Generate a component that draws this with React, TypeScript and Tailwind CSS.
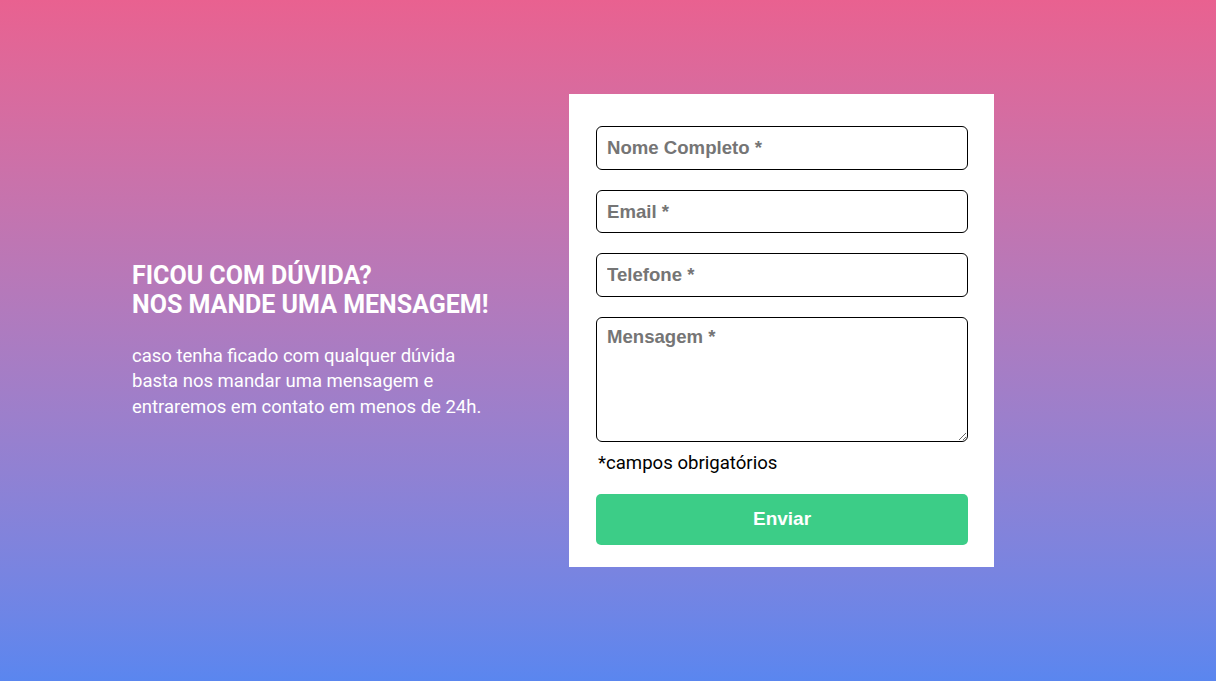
export default function App() {
  return (
    <div className="min-h-[681px] w-full bg-gradient-to-b from-[#e96190] to-[#5a86ef] flex items-center font-['Roboto',sans-serif]">
      <div className="flex items-center w-full pl-[132px] pb-5">
        <div className="w-[390px] pt-5 text-white">
          <h1 className="text-[25px] font-bold leading-[29px] uppercase">
            Ficou com dúvida?
            <br />
            Nos mande uma mensagem!
          </h1>
          <p className="mt-[25px] text-[18.5px] leading-[25.5px] w-[362px]">
            caso tenha ficado com qualquer dúvida basta nos mandar uma mensagem e entraremos em contato em menos de 24h.
          </p>
        </div>
        <form
          onSubmit={(e) => e.preventDefault()}
          className="ml-[47px] w-[425px] bg-white pt-8 pl-[27px] pr-[26px] pb-[22px] flex flex-col"
        >
          <input
            type="text"
            placeholder="Nome Completo *"
            className="h-[44px] w-full rounded-[6px] border border-black px-[10px] text-[18.6px] font-bold font-['Liberation_Sans',Arial,sans-serif] placeholder:text-[#757575] outline-none"
          />
          <input
            type="email"
            placeholder="Email *"
            className="mt-5 h-[43px] w-full rounded-[6px] border border-black px-[10px] text-[18.6px] font-bold font-['Liberation_Sans',Arial,sans-serif] placeholder:text-[#757575] outline-none"
          />
          <input
            type="tel"
            placeholder="Telefone *"
            className="mt-5 h-[44px] w-full rounded-[6px] border border-black px-[10px] text-[18.6px] font-bold font-['Liberation_Sans',Arial,sans-serif] placeholder:text-[#757575] outline-none"
          />
          <textarea
            placeholder="Mensagem *"
            className="mt-5 h-[125px] w-full rounded-[6px] border border-black px-[10px] pt-[5px] text-[18.6px] font-bold font-['Liberation_Sans',Arial,sans-serif] placeholder:text-[#757575] outline-none"
          />
          <p className="mt-[10px] pl-[2px] text-[18.6px] leading-[22px] text-black">*campos obrigatórios</p>
          <button
            type="submit"
            className="mt-5 h-[51px] w-full rounded-[5px] bg-[#3ccd87] text-white text-[19px] font-bold font-['Liberation_Sans',Arial,sans-serif]"
          >
            Enviar
          </button>
        </form>
      </div>
    </div>
  )
}
